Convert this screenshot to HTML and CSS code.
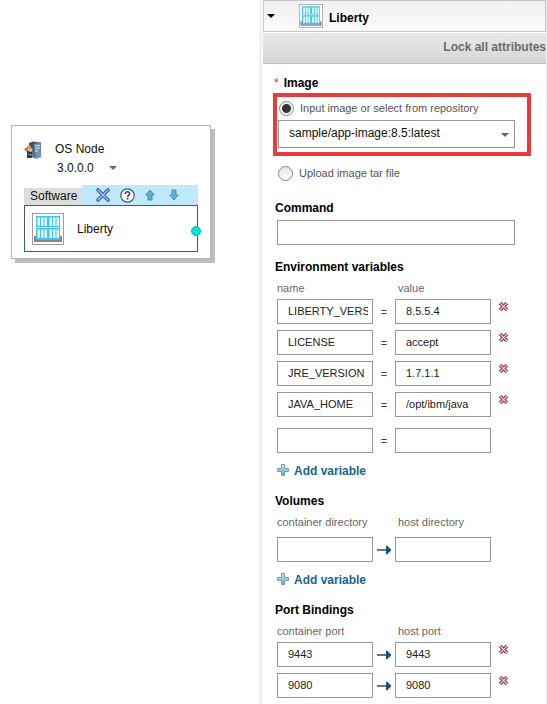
FILE: index.html
```
<!DOCTYPE html>
<html lang="en">
<head>
  <meta charset="UTF-8" />
  <meta name="viewport" content="width=device-width, initial-scale=1.0"/>
  <title>Liberty</title>
  <link rel="stylesheet" href="styles.css">
</head>
<body>
  <!-- Shared icons -->
  <svg class="sprite" aria-hidden="true">
    <linearGradient id="plus-fill" x1="0" y1="0" x2="0" y2="1">
      <stop offset="0" stop-color="#c6ebf2"/>
      <stop offset="1" stop-color="#5cabc4"/>
    </linearGradient>
    <linearGradient id="server-fill" x1="0" y1="0" x2="1" y2="1">
      <stop offset="0" stop-color="#2f4254"/>
      <stop offset="1" stop-color="#7394ad"/>
    </linearGradient>
    <symbol id="icon-liberty" viewBox="0 0 32 32">
      <rect x=".5" y=".5" width="31" height="31" fill="#fff" stroke="#a69a9a"/>
      <path d="M3 23v5h26v-5" fill="none" stroke="#85898c" stroke-width="2"/>
      <path d="M4 3h12v11H4zM16 3h12v11H16zM4 15h12v12H4zM16 15h12v12H16z" fill="#3fc4ea"/>
      <path d="M5.500 4.500H8V13H5.500zM9 4.500h2.500V13H9zM12.500 4.500H15V13h-2.500zM17.500 4.500H20V13h-2.500zM21 4.500h2.500V13H21zM24.500 4.500H27V13h-2.500zM5.500 16.500H8V25H5.500zM9 16.500h2.500V25H9zM12.500 16.500H15V25h-2.500zM17.500 16.500H20V25h-2.500zM21 16.500h2.500V25H21zM24.500 16.500H27V25h-2.500z" fill="#e6f8fd"/>
    </symbol>
    <symbol id="icon-delete" viewBox="0 0 11 11">
      <path d="M2 2l7 7M9 2L2 9" fill="none" stroke="#8e3f47" stroke-width="3.600"/>
      <path d="M2 2l7 7M9 2L2 9" fill="none" stroke="#e6c9cb" stroke-width="1.200"/>
    </symbol>
    <symbol id="icon-plus" viewBox="0 0 12 12">
      <path d="M4.500.5h3v4h4v3h-4v4h-3v-4h-4v-3h4z" fill="url(#plus-fill)" stroke="#7d9ba5"/>
    </symbol>
    <symbol id="icon-arrow" viewBox="0 0 16 10">
      <path d="M1 4.300h9V.8h1.200L15.500 5l-4.300 4.200H10V5.700H1z" fill="#1b4f7d"/>
    </symbol>
    <symbol id="icon-caret" viewBox="0 0 8 4">
      <path d="M0 0h8L4 4z" fill="currentColor"/>
    </symbol>
  </svg>

  <div class="layout">
    <main class="canvas">
      <div class="node">
        <div class="node-head">
          <svg class="node-icon" viewBox="0 0 19 19" aria-hidden="true">
            <path d="M4 15l9 3 6-2-5-2z" fill="#a9b4bc"/>
            <path d="M5 2l4-1.500 8 1V15l-5 2.500L5 15z" fill="url(#server-fill)"/>
            <path d="M10 3l6.500-1v12.500L12 17z" fill="#6f92b0"/>
            <path d="M11 5l5-.5M11 7.500l5-.5M11 10h3" stroke="#d3e6f2" fill="none"/>
            <path d="M3 10h5v7H3z" fill="#283a4a"/>
            <circle cx="5" cy="6" r="2" fill="#da9560"/>
            <circle cx="2.500" cy="8.500" r="2" fill="#c47d4b"/>
            <circle cx="6.500" cy="9" r="2" fill="#edb37e"/>
            <path d="M4 13l5 1.500" stroke="#6eafe0" fill="none"/>
          </svg>
          <div>
            <div class="node-name">OS Node</div>
            <button class="version" type="button">3.0.0.0 <svg class="caret"><use href="#icon-caret"/></svg></button>
          </div>
        </div>
        <div class="node-bar">
          <span class="tab">Software</span>
          <div class="tools">
            <button type="button" aria-label="Remove">
              <svg width="14" height="14" viewBox="0 0 14 14">
                <path d="M2 2l10 10M12 2L2 12" fill="none" stroke="#3a639e" stroke-width="3.600" stroke-linecap="round"/>
                <path d="M2 2l10 10M12 2L2 12" fill="none" stroke="#a4c0e4" stroke-width="1.400" stroke-linecap="round"/>
              </svg>
            </button>
            <button type="button" aria-label="Help">
              <svg width="15" height="15" viewBox="0 0 15 15">
                <circle cx="7.500" cy="7.500" r="6.700" fill="#fff" stroke="#40577e" stroke-width="1.200"/>
                <path d="M5.300 6c0-3 4.600-2.800 4.400-.2C9.600 7.200 7.600 7.200 7.600 9" fill="none" stroke="#2b4170" stroke-width="1.500"/>
                <path d="M6.800 10h1.600v1.600H6.800z" fill="#2b4170"/>
              </svg>
            </button>
            <button type="button" aria-label="Move up">
              <svg width="10" height="12" viewBox="0 0 10 12">
                <path d="M5 1l4.300 5H7v5H3V6H.7z" fill="#5eafcb" stroke="#4a8fae"/>
              </svg>
            </button>
            <button type="button" aria-label="Move down">
              <svg width="10" height="12" viewBox="0 0 10 12">
                <path d="M5 11L.7 6H3V1h4v5h2.300z" fill="#5eafcb" stroke="#4a8fae"/>
              </svg>
            </button>
          </div>
        </div>
        <div class="software">
          <svg class="software-icon"><use href="#icon-liberty"/></svg>
          <span>Liberty</span>
          <span class="port"></span>
        </div>
      </div>
    </main>

    <aside class="panel">
      <header class="panel-head">
        <button type="button" aria-label="Collapse"><svg class="caret"><use href="#icon-caret"/></svg></button>
        <svg class="panel-icon"><use href="#icon-liberty"/></svg>
        <h1>Liberty</h1>
      </header>
      <div class="lock-bar"><button type="button">Lock all attributes</button></div>

      <form class="form">
        <section class="image">
          <h2><span class="required">*</span>Image</h2>
          <div class="highlight">
            <label class="radio"><input type="radio" name="source" checked> Input image or select from repository</label>
            <div class="select">
              <select aria-label="Image">
                <option>sample/app-image:8.5:latest</option>
              </select>
              <svg class="caret"><use href="#icon-caret"/></svg>
            </div>
          </div>
          <label class="radio"><input type="radio" name="source"> Upload image tar file</label>
        </section>

        <section class="command">
          <h2><label for="command">Command</label></h2>
          <input class="text" id="command" type="text">
        </section>

        <section class="env">
          <h2>Environment variables</h2>
          <div class="row labels"><span id="env-name">name</span><span id="env-value">value</span></div>
          <div class="rows">
            <div class="row">
              <input class="text" type="text" aria-labelledby="env-name" value="LIBERTY_VERSION">
              <span class="equals">=</span>
              <input class="text" type="text" aria-labelledby="env-value" value="8.5.5.4">
              <button class="delete" type="button" aria-label="Delete"><svg><use href="#icon-delete"/></svg></button>
            </div>
            <div class="row">
              <input class="text" type="text" aria-labelledby="env-name" value="LICENSE">
              <span class="equals">=</span>
              <input class="text" type="text" aria-labelledby="env-value" value="accept">
              <button class="delete" type="button" aria-label="Delete"><svg><use href="#icon-delete"/></svg></button>
            </div>
            <div class="row">
              <input class="text" type="text" aria-labelledby="env-name" value="JRE_VERSION">
              <span class="equals">=</span>
              <input class="text" type="text" aria-labelledby="env-value" value="1.7.1.1">
              <button class="delete" type="button" aria-label="Delete"><svg><use href="#icon-delete"/></svg></button>
            </div>
            <div class="row">
              <input class="text" type="text" aria-labelledby="env-name" value="JAVA_HOME">
              <span class="equals">=</span>
              <input class="text" type="text" aria-labelledby="env-value" value="/opt/ibm/java">
              <button class="delete" type="button" aria-label="Delete"><svg><use href="#icon-delete"/></svg></button>
            </div>
            <div class="row new">
              <input class="text" type="text" aria-labelledby="env-name">
              <span class="equals">=</span>
              <input class="text" type="text" aria-labelledby="env-value">
            </div>
          </div>
          <button class="add" type="button"><svg><use href="#icon-plus"/></svg>Add variable</button>
        </section>

        <section class="volumes">
          <h2>Volumes</h2>
          <div class="row labels"><span id="vol-container">container directory</span><span id="vol-host">host directory</span></div>
          <div class="rows">
            <div class="row">
              <input class="text" type="text" aria-labelledby="vol-container">
              <svg class="arrow"><use href="#icon-arrow"/></svg>
              <input class="text" type="text" aria-labelledby="vol-host">
            </div>
          </div>
          <button class="add" type="button"><svg><use href="#icon-plus"/></svg>Add variable</button>
        </section>

        <section class="ports">
          <h2>Port Bindings</h2>
          <div class="row labels"><span id="port-container">container port</span><span id="port-host">host port</span></div>
          <div class="rows">
            <div class="row">
              <input class="text" type="text" aria-labelledby="port-container" value="9443">
              <svg class="arrow"><use href="#icon-arrow"/></svg>
              <input class="text" type="text" aria-labelledby="port-host" value="9443">
              <button class="delete" type="button" aria-label="Delete"><svg><use href="#icon-delete"/></svg></button>
            </div>
            <div class="row">
              <input class="text" type="text" aria-labelledby="port-container" value="9080">
              <svg class="arrow"><use href="#icon-arrow"/></svg>
              <input class="text" type="text" aria-labelledby="port-host" value="9080">
              <button class="delete" type="button" aria-label="Delete"><svg><use href="#icon-delete"/></svg></button>
            </div>
          </div>
        </section>
      </form>
    </aside>
  </div>
</body>
</html>
```
FILE: styles.css
```
* { box-sizing: border-box; }
body { margin: 0; background: #fff; color: #111; font: 12px/16px "Liberation Sans", Arial, sans-serif; }
svg { display: block; }
h1, h2 { margin: 0; font-size: 12px; line-height: 16px; color: #000; }
button { margin: 0; padding: 0; border: 0; background: none; color: inherit; font: inherit; cursor: pointer; }
.sprite { position: absolute; width: 0; height: 0; }
.caret { width: 8px; height: 4px; }
.layout { display: grid; grid-template-columns: minmax(230px, 1fr) 288px; min-height: 100vh; }

/* Canvas node */
.canvas { padding: 125px 0 0 11px; }
.node { width: 200px; padding: 15px 12px 6px; border: 1px solid #b5b5b5; background: #fff; box-shadow: 4px 4px 0 #bdbdbd; }
.node-head { display: flex; gap: 12px; }
.node-icon { width: 19px; height: 19px; }
.node-name { line-height: 17px; }
.version { display: flex; align-items: center; gap: 15px; padding: 2px; line-height: 16px; }
.version .caret { color: #666; }
.node-bar { display: flex; align-items: flex-end; margin-top: 7px; }
.tab { width: 58px; height: 17px; padding-left: 6px; background: #dcdcdc; line-height: 17px; }
.tools { display: flex; flex: 1; align-items: center; gap: 10px; height: 20px; padding-left: 14px; background: #bfe9fa; }
.tools button:nth-child(n+4) { margin-left: 4px; }
.software { position: relative; display: flex; align-items: center; gap: 13px; height: 47px; padding-left: 7px; border: 1px solid #3c5590; }
.software-icon { width: 32px; height: 32px; }
.port { position: absolute; top: 20px; right: -4px; width: 10px; height: 10px; border: 1px solid #00c0ba; border-radius: 50%; background: #00e2da; }

/* Properties panel */
.panel { padding-left: 4px; border-right: 1px solid #eee; background: linear-gradient(to right, #f1f1f1 3px, #fff 3px); }
.panel-head { display: flex; align-items: center; height: 32px; padding-left: 3px; border: 1px solid #c4c4c4; background: linear-gradient(#f1f1f1, #fafafa); color: #000; }
.panel-icon { width: 24px; height: 24px; margin: 0 6px 0 24px; }
.panel-head h1 { padding-top: 4px; }
.lock-bar { height: 31px; margin-top: 1px; border-bottom: 1px solid #bdbdbd; background: linear-gradient(#e9e9e9, #d6d6d6); color: #6b6b6b; text-align: right; }
.lock-bar button { font-weight: bold; line-height: 28px; }
.form { padding: 11px 31px 6px 14px; }
.form h2 { margin-left: -2px; }
.image h2 { margin-left: -3px; }
.required { margin-right: 5px; color: #c8374a; font-weight: normal; }
.highlight { margin: 2px -16px 9px -4px; padding: 3px 12px 4px 1px; border: 4px solid #e83b3b; }
.radio { display: flex; align-items: center; gap: 6px; color: #555; font-size: 11px; line-height: 16px; }
.radio input { appearance: none; width: 15px; height: 15px; margin: 0 0 0 1px; border: 1px solid #888; border-radius: 50%; background: linear-gradient(#e2e2e2, #fff); }
.radio input:checked { background: radial-gradient(circle, #333 4px, #f4f4f4 5px); }
.select { position: relative; margin-top: 4px; }
.select select { display: block; width: 100%; height: 28px; padding: 0 24px 2px 10px; border: 1px solid #999; border-radius: 0; background: #fff; color: #111; font: inherit; appearance: none; }
.select .caret { position: absolute; top: 13px; right: 6px; color: #666; pointer-events: none; }
.command { margin-top: 19px; }
.text { width: 100%; min-width: 0; height: 25px; padding: 0 4px 2px 10px; border: 1px solid #999; border-radius: 0; background: #fff; color: #222; font: 11px "Liberation Sans", Arial, sans-serif; }
.command .text { display: block; margin-top: 4px; }
.env { margin-top: 14px; }
.row { display: grid; grid-template-columns: 1fr 22px 1fr 24px; align-items: center; }
.labels { margin-top: 6px; color: #666; font-size: 11px; line-height: 14px; }
.labels span:last-child { grid-column: 3 / 5; padding-left: 3px; }
.rows { display: grid; gap: 6px; margin-top: 4px; }
.new { margin-top: 5px; }
.equals { color: #444; font-size: 11px; text-align: center; }
.arrow { width: 16px; height: 10px; margin: 0 auto; }
.delete { align-self: start; justify-self: center; padding-top: 2px; }
.delete svg { width: 11px; height: 11px; }
.add { display: flex; align-items: center; gap: 5px; margin-top: 10px; color: #17658f; font-weight: bold; }
.add svg { width: 12px; height: 12px; margin-bottom: 2px; }
.volumes, .ports { margin-top: 14px; }
.volumes .rows { margin-top: 8px; }
```
